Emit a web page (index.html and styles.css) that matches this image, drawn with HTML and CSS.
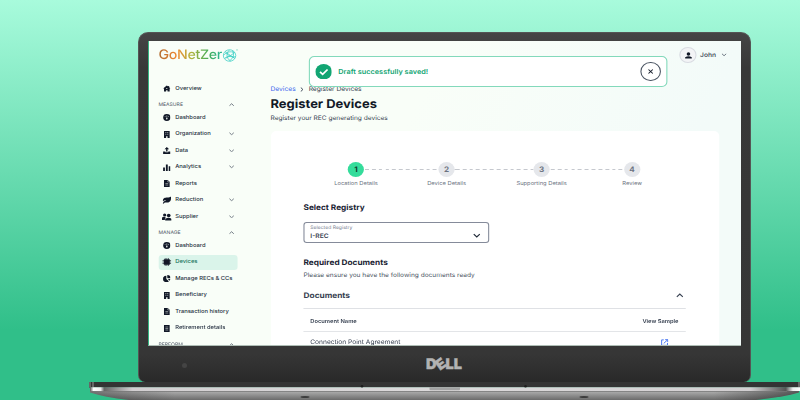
FILE: index.html
```html
<!DOCTYPE html>
<html lang="en">
<head>
<meta charset="utf-8">
<title>GoNetZero - Register Devices</title>
<link rel="stylesheet" href="styles.css">
</head>
<body>
<svg class="defs" width="0" height="0">
  <symbol id="up" viewBox="0 0 10 6"><path d="M1 5l4-4 4 4" fill="none" stroke="currentColor" stroke-width="1.5"/></symbol>
  <symbol id="down" viewBox="0 0 10 6"><path d="M1 1l4 4 4-4" fill="none" stroke="currentColor" stroke-width="1.5"/></symbol>
  <symbol id="home" viewBox="0 0 16 16"><path d="M8 1L0 8h2v7h4.500v-3h3v3H14V8h2l-3-3V2h-2v1.500z" fill="currentColor"/><circle cx="8" cy="8" r="1.300" fill="#fafffb"/></symbol>
  <symbol id="gauge" viewBox="0 0 16 16"><circle cx="8" cy="8" r="7.800" fill="currentColor"/><path d="M8 11V3M4.500 5v2M11.500 5v2" stroke="#fafffb" stroke-width="1.100"/><circle cx="8" cy="11" r="1.600" fill="#fafffb"/></symbol>
  <symbol id="building" viewBox="0 0 16 16"><path d="M2 0h12v16H9.500v-4h-3v4H2z" fill="currentColor"/><path d="M5 3.500h2M9 3.500h2M5 7.500h2M9 7.500h2" stroke="#fafffb" stroke-width="1.400"/></symbol>
  <symbol id="upload" viewBox="0 0 16 16"><path d="M8 0l5 5H9.500v5h-3V5H3zM0 10h5v2h6v-2h5v6H0z" fill="currentColor"/></symbol>
  <symbol id="bars" viewBox="0 0 16 16"><path d="M0 8h4v8H0zM6 1h4v15H6zM12 5h4v11h-4z" fill="currentColor"/></symbol>
  <symbol id="file" viewBox="0 0 16 16"><path d="M2 0h8l4 4v12H2z" fill="currentColor"/><path d="M5 8h6M5 11.500h6M10 1v3.500h3" stroke="#fafffb" stroke-width="1" fill="none"/></symbol>
  <symbol id="receipt" viewBox="0 0 16 16"><path d="M2 0h12v16H2z" fill="currentColor"/><path d="M5 4.500h6M5 8h6M5 11.500h6" stroke="#fafffb" stroke-width="1" fill="none"/></symbol>
  <symbol id="leaf" viewBox="0 0 16 16"><path d="M15.500 1c1.500 8-2 13-9 12-2-.3-3 .2-4.500 2.500L.5 14.500C2 12 3 10 7 8 4 8 2.500 9 1 11-.5 4 5 3 9 3c3 0 5-.5 6.500-2z" fill="currentColor"/></symbol>
  <symbol id="people" viewBox="0 0 18 16"><circle cx="5" cy="4" r="3" fill="currentColor"/><circle cx="12.500" cy="5" r="3.500" fill="currentColor"/><path d="M0 14V9q4-3 7 0l-2 5zM6 15v-3q6.500-5 12 0v3z" fill="currentColor"/></symbol>
  <symbol id="chip" viewBox="0 0 16 16"><path d="M2.500 2.500h11v11h-11z" fill="currentColor"/><path d="M5 0v16M8 0v16M11 0v16M0 5h16M0 8h16M0 11h16" stroke="currentColor" stroke-width="1.200"/></symbol>
  <symbol id="pie" viewBox="0 0 16 16"><path d="M7 1.500V9l5.500 5A7.500 7.500 0 1 1 7 1.500z" fill="currentColor"/><path d="M9 0a7 7 0 0 1 7 7H9zM9.500 8.500H16a7 7 0 0 1-2 4.500z" fill="currentColor"/></symbol>
</svg>
<div class="scene">
  <div class="lid">
    <div class="screen">
      <div class="app">
        <nav class="sidebar">
          <div class="logo"><span class="word">GoNetZer</span><svg class="globe" viewBox="0 0 16 14"><g fill="none" stroke="#3ccfc4" stroke-width=".8"><circle cx="7" cy="7" r="6.200"/><path d="M1 7c3-4 7-5 11-3M3 2.500c1 4 5 6 10 6M2 10c4-3 8-2 10 0M7 1C3 5 4 10 8 13M10 2c2 4 1 8-3 10.500M4 4l4 3 4-3M3 10l5-3 4 3"/></g><path d="M13.500 1h2" stroke="#55c9ab" stroke-width=".6"/></svg></div>
          <div class="item"><svg><use href="#home"/></svg><span>Overview</span></div>
          <div class="group"><span>MEASURE</span><svg class="chev"><use href="#up"/></svg></div>
          <div class="item"><svg><use href="#gauge"/></svg><span>Dashboard</span></div>
          <div class="item"><svg><use href="#building"/></svg><span>Organization</span><svg class="chev"><use href="#down"/></svg></div>
          <div class="item"><svg><use href="#upload"/></svg><span>Data</span><svg class="chev"><use href="#down"/></svg></div>
          <div class="item"><svg><use href="#bars"/></svg><span>Analytics</span><svg class="chev"><use href="#down"/></svg></div>
          <div class="item"><svg><use href="#file"/></svg><span>Reports</span></div>
          <div class="item"><svg class="wide"><use href="#leaf"/></svg><span>Reduction</span><svg class="chev"><use href="#down"/></svg></div>
          <div class="item"><svg class="wide"><use href="#people"/></svg><span>Supplier</span><svg class="chev"><use href="#down"/></svg></div>
          <div class="group"><span>MANAGE</span><svg class="chev"><use href="#up"/></svg></div>
          <div class="item"><svg><use href="#gauge"/></svg><span>Dashboard</span></div>
          <div class="item active"><svg class="wide"><use href="#chip"/></svg><span>Devices</span></div>
          <div class="item"><svg><use href="#pie"/></svg><span>Manage RECs &amp; CCs</span></div>
          <div class="item"><svg><use href="#building"/></svg><span>Beneficiary</span></div>
          <div class="item"><svg><use href="#file"/></svg><span>Transaction history</span></div>
          <div class="item"><svg><use href="#receipt"/></svg><span>Retirement details</span></div>
          <div class="group"><span>PERFORM</span><svg class="chev"><use href="#up"/></svg></div>
        </nav>
        <main class="main">
          <header class="user">
            <span class="avatar"><svg viewBox="0 0 16 16"><circle cx="8" cy="4.500" r="3.800" fill="#111827"/><path d="M1 15v-3q7-5 14 0v3z" fill="#111827"/></svg></span>
            <span>John</span><svg class="chev"><use href="#down"/></svg>
          </header>
          <div class="crumbs"><a>Devices</a><svg viewBox="0 0 6 10"><path d="M1 1l4 4-4 4" fill="none" stroke="#374151" stroke-width="1.800"/></svg><span>Register Devices</span></div>
          <h1>Register Devices</h1>
          <p class="lead">Register your REC generating devices</p>
          <section class="card">
            <div class="steps">
              <div class="step on"><b>1</b><span>Location Details</span></div><i></i>
              <div class="step"><b>2</b><span>Device Details</span></div><i></i>
              <div class="step"><b>3</b><span>Supporting Details</span></div><i></i>
              <div class="step"><b>4</b><span>Review</span></div>
            </div>
            <h2>Select Registry</h2>
            <div class="select"><div><small>Selected Registry</small><strong>I-REC</strong></div><svg><use href="#down"/></svg></div>
            <h2 class="required">Required Documents</h2>
            <p class="hint">Please ensure you have the following documents ready</p>
            <div class="accordion"><span>Documents</span><svg><use href="#up"/></svg></div>
            <div class="row head"><span>Document Name</span><span>View Sample</span></div>
            <div class="row"><span>Connection Point Agreement</span><svg class="ext" viewBox="0 0 16 16"><path d="M6 2H1.500v12.500H14V9M9 1.500h5.500V7M14 2L6 10" fill="none" stroke="#3b6cf0" stroke-width="2"/></svg></div>
          </section>
        </main>
        <div class="toast">
          <svg class="ok" viewBox="0 0 16 16"><circle cx="8" cy="8" r="8" fill="#12a573"/><path d="M4.500 8.200l2.500 2.500 4.700-5" fill="none" stroke="#fff" stroke-width="1.700"/></svg>
          <span>Draft successfully saved!</span>
          <span class="close"><svg viewBox="0 0 10 10"><path d="M1 1l8 8M9 1L1 9" stroke="#111827" stroke-width="2"/></svg></span>
        </div>
      </div>
    </div>
    <div class="chin"><span class="sensor"></span><div class="brand">D<span>E</span>LL</div></div>
  </div>
  <svg class="base" width="711" height="18" viewBox="0 0 711 18">
    <defs>
      <linearGradient id="under" x2="0" y2="1"><stop stop-color="#b0b0b0"/><stop offset="1" stop-color="#6b6b6b"/></linearGradient>
      <linearGradient id="edge"><stop stop-color="#555"/><stop offset=".005" stop-color="#fff"/><stop offset=".015" stop-color="#eee"/><stop offset=".02" stop-color="#666"/><stop offset=".06" stop-color="#d2cfd1"/><stop offset=".5" stop-color="#dcdadb"/><stop offset=".93" stop-color="#d2cfd1"/><stop offset=".98" stop-color="#555"/><stop offset=".99" stop-color="#eee"/><stop offset="1" stop-color="#fff"/></linearGradient>
      <linearGradient id="shade"><stop stop-color="#222" stop-opacity=".4"/><stop offset=".12" stop-color="#222" stop-opacity="0"/><stop offset=".88" stop-color="#222" stop-opacity="0"/><stop offset="1" stop-color="#222" stop-opacity=".6"/></linearGradient>
    </defs>
    <path d="M1 9H710V10.500Q695 15 667 18H40Q15 15 1 10.500z" fill="url(#under)"/>
    <path d="M1 9H710V10.500Q695 15 667 18H40Q15 15 1 10.500z" fill="url(#shade)"/>
    <path d="M0 0H711V5.500H0z" fill="#343434"/>
    <path d="M0 0H2V5.500H0zM3 0h2v5.500H3zM709 0h2v5.500h-2z" fill="#666"/>
    <path d="M1 5.300H711V9H1z" fill="url(#edge)"/>
    <path d="M14 9H698v.8H14z" fill="#777"/>
    <path d="M340.500 5.300h30.500v2q0 1-1 1h-28.500q-1 0-1-1z" fill="#a3a3a3"/>
    <g fill="#1c1c1c"><circle cx="273" cy="4.300" r="1.300"/><circle cx="436.500" cy="4.300" r="1.300"/></g>
    <g fill="#3c3c3c"><ellipse cx="216" cy="15" rx="4.500" ry="1"/><ellipse cx="495" cy="15" rx="4.500" ry="1"/></g>
  </svg>
</div>
</body>
</html>
```
FILE: styles.css
```css
* { box-sizing: border-box; }
body { margin: 0; font-family: Inter, "Liberation Sans", sans-serif; text-rendering: geometricPrecision; }
h1, h2, p { margin: 0; }
svg { display: block; flex: none; }
.defs { display: none; }
.scene { width: 800px; height: 400px; overflow: hidden; padding-top: 32px; background: linear-gradient(#a8fbdc 0, #30bf89 330px); }
.lid { width: 613px; height: 350px; margin-left: 138px; padding: 8px 10px 0 9px; border: 1.5px solid #555; border-bottom: 0; border-radius: 10px 10px 7px 7px; background: linear-gradient(#454545, #383838 10%, #363636 92%, #292929); }
.screen { width: 593px; height: 305px; overflow: hidden; border-left: 1px solid #35b482; border-bottom: 1px solid #aebdb5; background: #fafffb; }

/* The interface is laid out at 549px and widened to fill the panel. */
.app { position: relative; display: flex; width: 549px; height: 305px; transform: scaleX(1.08); transform-origin: 0 0; background: linear-gradient(115deg, #f9fef8 40%, #f3fbf9 80%); color: #374151; }
.sidebar { width: 112.500px; padding: .7px 30.500px 0 8.800px; }
.logo { display: flex; align-items: center; width: 80px; height: 27px; margin-bottom: 11.700px; }
.word { font-size: 13.200px; font-weight: 500; letter-spacing: -.32px; background: linear-gradient(90deg, #b06a2c, #f08a35 28%, #b3b23b 50%, #45ac58 78%, #2bb99b); background-clip: text; color: transparent; }
.globe { width: 15px; height: 13px; }
.item { display: flex; align-items: center; height: 16.500px; padding-left: 4.200px; font-size: 5.400px; font-weight: 500; color: #253041; white-space: nowrap; }
.item > svg:first-child { width: 7px; height: 7px; margin-right: 4.300px; color: #111827; }
.item > svg.wide:first-child { width: 9px; height: 8px; margin: 0 3.300px 0 -1px; }
.item .chev { margin-left: auto; }
.chev { width: 5px; height: 3.500px; margin-right: 3.500px; color: #4b5563; }
.group { display: flex; justify-content: space-between; align-items: center; height: 12.500px; padding-top: 4px; font-size: 4.700px; color: #4b5563; }
.item.active { height: 15px; margin: .75px 0; border-radius: 3px; background: #daf4ea; color: #16735a; }
.main { width: 415px; }
.user { display: flex; align-items: center; justify-content: flex-end; height: 27px; margin-right: -7.500px; padding-top: 1px; font-size: 6.200px; font-weight: 500; }
.user .chev { margin: 0 0 0 5px; }
.avatar { display: grid; place-items: center; width: 16px; height: 16px; margin-right: 3px; border: .6px solid #d9dce2; border-radius: 50%; background: #f3f4f6; }
.avatar svg { width: 7px; height: 7px; }
.crumbs { display: flex; align-items: center; height: 10px; margin-top: 16px; font-size: 6.200px; }
.crumbs a { color: #3f68ee; }
.crumbs svg { width: 3px; height: 5px; margin: 0 4.500px; }
h1 { height: 15px; margin-top: 2.300px; font-size: 12px; line-height: 15px; font-weight: 700; color: #111827; }
.lead { height: 8px; margin-top: 3.700px; font-size: 6.100px; line-height: 8px; }
.card { height: 230px; margin-top: 8.500px; padding: 30.500px 31px 0 30.600px; border-radius: 5px; background: #fff; }
.steps { display: flex; margin-left: 41px; }
.step { display: flex; flex-direction: column; align-items: center; width: 15.300px; font-size: 5.350px; color: #6b7280; white-space: nowrap; }
.step b { display: grid; place-items: center; width: 15.300px; height: 15.300px; border-radius: 50%; background: #e5e7eb; font-size: 7.500px; }
.step.on b { background: #34dc9b; color: #123c31; }
.step span { height: 8px; margin-top: 3.200px; line-height: 8px; }
.steps i { width: 68.500px; height: 1px; margin-top: 7.200px; background: repeating-linear-gradient(90deg, #c5c8ce 0 3.500px, transparent 3.500px 6.300px) 1px 0; }
.steps i:nth-of-type(2) { width: 72.700px; }
h2 { height: 10px; margin-top: 15px; font-size: 7.650px; line-height: 10px; font-weight: 700; color: #1a2333; }
.select { display: flex; justify-content: space-between; align-items: center; width: 171.800px; height: 21px; margin-top: 8.300px; padding: 1px 7px 0 5.300px; border: 1px solid #858b9a; border-radius: 3px; }
.select small { display: block; font-size: 4.700px; line-height: 7px; color: #7b8392; }
.select strong { display: block; font-size: 6.200px; line-height: 9px; font-weight: 600; }
.select svg { width: 7px; height: 5px; margin-top: 6px; color: #1f2937; }
.required { margin-top: 15.700px; }
.hint { height: 8px; margin-top: 3.300px; font-size: 6.080px; line-height: 8px; color: #4b5563; }
.accordion { display: flex; align-items: center; justify-content: space-between; height: 27.500px; padding-top: 1.500px; margin-top: 2px; border-bottom: 1px solid #dfe1e5; font-size: 7.700px; font-weight: 650; }
.accordion svg { width: 7px; height: 5px; margin-right: 1.500px; }
.row { display: flex; align-items: center; justify-content: space-between; height: 20px; padding: 0 6.200px; font-size: 6.150px; }
.head { height: 23px; padding-top: 4px; border-bottom: 1px solid #e3e5e8; font-size: 5.350px; font-weight: 600; }
.ext { width: 7px; height: 7px; margin-right: 9px; }
.toast { position: absolute; left: 147.800px; top: 15px; display: flex; align-items: center; width: 332px; height: 31px; padding: 0 5px; border: 1px solid #83d9bb; border-radius: 5px; background: #fff; color: #12a573; font-size: 6.800px; font-weight: 600; }
.ok { width: 15.500px; height: 15.500px; margin-right: 6px; }
.close { display: grid; place-items: center; width: 18.500px; height: 18.500px; margin-left: auto; border: .8px solid #4b5563; border-radius: 50%; }
.close svg { width: 5px; height: 5px; }

.chin { position: relative; display: flex; justify-content: center; padding-top: 9.500px; }
.sensor { position: absolute; left: 34px; top: 17px; width: 5px; height: 5px; border-radius: 50%; background: #444; }
.brand { font-size: 14.500px; line-height: 18px; font-weight: 900; color: #b3b3b3; -webkit-text-stroke: .4px #b3b3b3; }
.brand span { display: inline-block; transform: rotate(-35deg); }
.base { margin-left: 89px; }
```
